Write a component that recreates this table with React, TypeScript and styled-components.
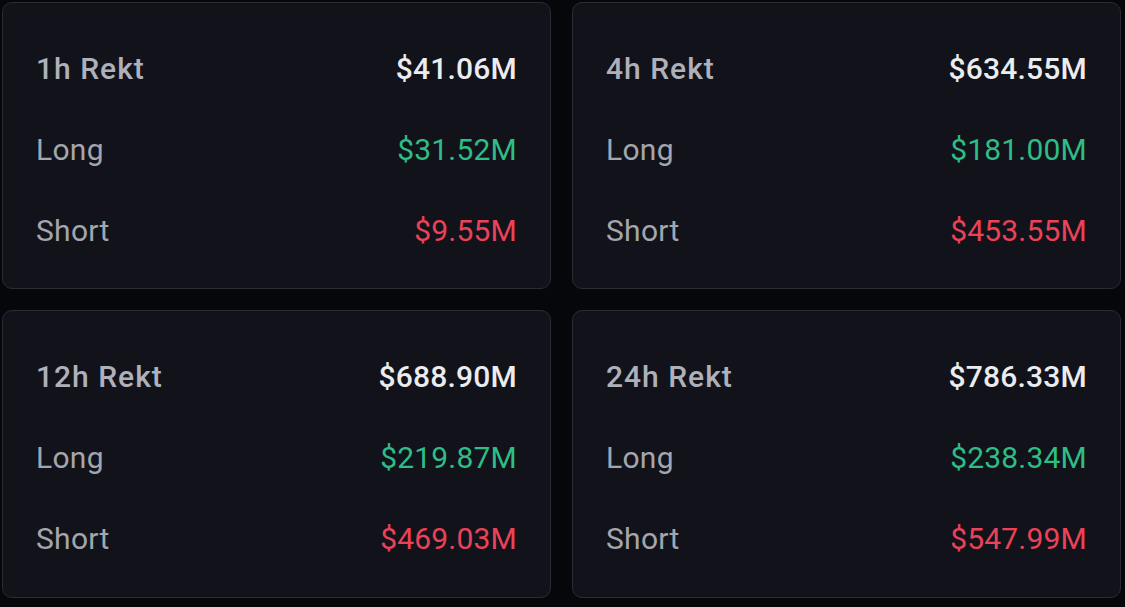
import React from "react";
import styled, { createGlobalStyle } from "styled-components";

const Global = createGlobalStyle`
  html, body { margin: 0; padding: 0; background: #06070b; }
  body { font-family: Roboto, "Noto Sans", Arial, sans-serif; }
`;

const Page = styled.div`
  width: 1125px;
  height: 607px;
  box-sizing: border-box;
  padding: 2px 4px 9px 2px;
  background: #06070b;
  display: grid;
  grid-template-columns: 549px 549px;
  grid-template-rows: 287px 288px;
  column-gap: 21px;
  row-gap: 21px;
`;

const Card = styled.div`
  box-sizing: border-box;
  background: #12131a;
  border: 1px solid #2a2c34;
  border-radius: 10px;
  padding: 25px 33px 0 33px;
  display: flex;
  flex-direction: column;
`;

const Row = styled.div`
  height: 81px;
  display: flex;
  align-items: center;
  justify-content: space-between;
  font-size: 30px;
`;

const Label = styled.span<{ $head?: boolean }>`
  color: ${(p) => (p.$head ? "#aeb1ba" : "#a3a6ae")};
  font-weight: ${(p) => (p.$head ? 500 : 400)};
  letter-spacing: ${(p) => (p.$head ? "1px" : "0.3px")};
`;

const Value = styled.span<{ $tone: "head" | "up" | "down" }>`
  color: ${(p) =>
    p.$tone === "up" ? "#2ebd85" : p.$tone === "down" ? "#ec4259" : "#eaecef"};
  font-weight: ${(p) => (p.$tone === "head" ? 500 : 400)};
  letter-spacing: 0.2px;
`;

const data = [
  { period: "1h Rekt", total: "$41.06M", long: "$31.52M", short: "$9.55M" },
  { period: "4h Rekt", total: "$634.55M", long: "$181.00M", short: "$453.55M" },
  { period: "12h Rekt", total: "$688.90M", long: "$219.87M", short: "$469.03M" },
  { period: "24h Rekt", total: "$786.33M", long: "$238.34M", short: "$547.99M" },
];

export default function App() {
  return (
    <>
      <Global />
      <Page>
        {data.map((d) => (
          <Card key={d.period}>
            <Row>
              <Label $head>{d.period}</Label>
              <Value $tone="head">{d.total}</Value>
            </Row>
            <Row>
              <Label>Long</Label>
              <Value $tone="up">{d.long}</Value>
            </Row>
            <Row>
              <Label>Short</Label>
              <Value $tone="down">{d.short}</Value>
            </Row>
          </Card>
        ))}
      </Page>
    </>
  );
}
